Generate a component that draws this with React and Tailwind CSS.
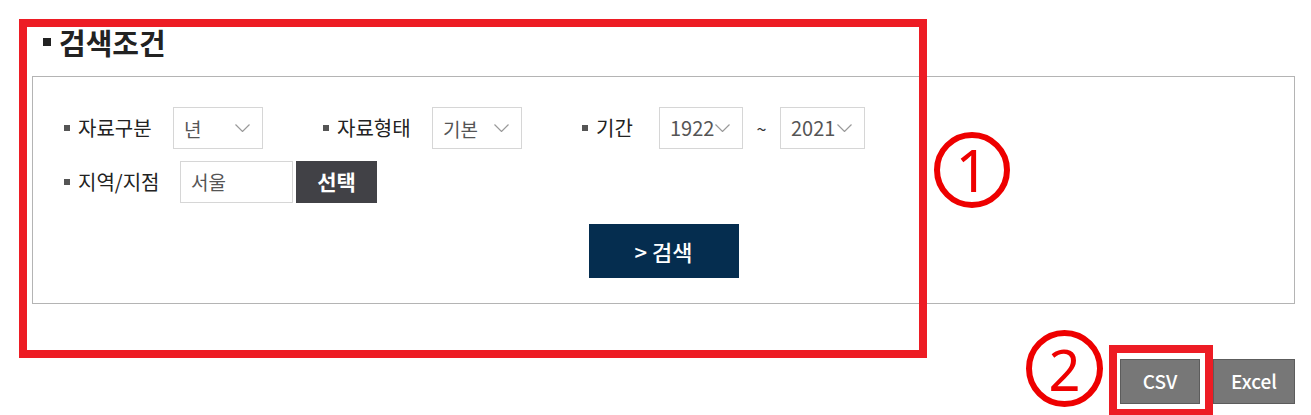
const FONT = { fontFamily: '"Noto Sans CJK KR", "Noto Sans", sans-serif' };

function Chevron() {
  return (
    <svg width="15" height="8" viewBox="0 0 15 8" className="shrink-0">
      <polyline points="0.5,0.5 7.5,7.5 14.5,0.5" fill="none" stroke="#9a9a9a" strokeWidth="1.2" />
    </svg>
  );
}

function Select({ value, width, size = 'text-[19px]' }) {
  return (
    <div
      className="flex h-[42px] items-center justify-between border border-[#d6d6d6] bg-white pl-[10px] pr-[12px]"
      style={{ width }}
    >
      <span className={`${size} leading-none text-[#555]`}>{value}</span>
      <Chevron />
    </div>
  );
}

function Label({ text, width }) {
  return (
    <div className="flex items-center" style={{ width }}>
      <span className="h-[6px] w-[6px] bg-[#555]" />
      <span className="ml-[8px] text-[20px] leading-none text-[#222]">{text}</span>
    </div>
  );
}

export default function App() {
  return (
    <div className="relative h-[415px] w-[1311px] overflow-hidden bg-white" style={FONT}>
      <div className="pl-[32px] pr-[16px]">
        {/* title */}
        <div className="flex h-[76px] items-center pb-[10px] pl-[11px] pt-[18px]">
          <span className="h-[8px] w-[8px] bg-[#222]" />
          <h2 className="ml-[8px] text-[29px] font-bold leading-none text-[#222]">검색조건</h2>
        </div>

        {/* search box */}
        <div className="flex h-[228px] flex-col border border-[#b4b4b4] pl-[31px] pt-[30px]">
          <div className="flex items-center">
            <Label text="자료구분" width="109px" />
            <Select value="년" width="90px" />
            <div className="ml-[60px]">
              <Label text="자료형태" width="109px" />
            </div>
            <Select value="기본" width="90px" />
            <div className="ml-[60px]">
              <Label text="기간" width="77px" />
            </div>
            <Select value="1922" width="84px" size="text-[20px]" />
            <span className="w-[37px] text-center text-[18px] text-[#333]">~</span>
            <Select value="2021" width="85px" size="text-[20px]" />
          </div>

          <div className="mt-[12px] flex items-center">
            <Label text="지역/지점" width="116px" />
            <div className="flex h-[42px] w-[113px] items-center border border-[#d6d6d6] pl-[10px] text-[19px] text-[#555]">
              서울
            </div>
            <button className="ml-[3px] h-[42px] w-[81px] bg-[#414146] text-[21px] font-bold text-white">
              선택
            </button>
          </div>

          <div className="mt-[21px] flex justify-center pr-[31px]">
            <button className="h-[54px] w-[150px] bg-[#052d4f] text-[22px] font-medium text-white">
              &gt; 검색
            </button>
          </div>
        </div>

        {/* export buttons */}
        <div className="mt-[55px] flex justify-end gap-[13px]">
          <button className="h-[45px] w-[80px] border border-[#5c5c5c] bg-[#777] text-[19px] font-medium text-white">
            CSV
          </button>
          <button className="h-[45px] w-[82px] border border-[#5c5c5c] bg-[#777] text-[19px] font-medium text-white">
            Excel
          </button>
        </div>
      </div>

      {/* annotations */}
      <div className="pointer-events-none absolute left-[19px] top-[19px] h-[339px] w-[908px] border-[8px] border-[#ed1c24]" />
      <div className="pointer-events-none absolute left-[934px] top-[132px] flex h-[76px] w-[76px] items-center justify-center rounded-full border-[6px] border-[#ee0000]">
        <span className="text-[58px] leading-none text-[#ee0000]" style={{ fontFamily: '"Noto Sans", sans-serif' }}>1</span>
      </div>
      <div className="pointer-events-none absolute left-[1026px] top-[330px] flex h-[77px] w-[77px] items-center justify-center rounded-full border-[6px] border-[#ee0000]">
        <span className="text-[56px] leading-none text-[#ee0000]" style={{ fontFamily: '"Noto Sans", sans-serif' }}>2</span>
      </div>
      <div className="pointer-events-none absolute left-[1109px] top-[345px] h-[72px] w-[104px] border-[8px] border-[#ed1c24]" />
    </div>
  );
}
